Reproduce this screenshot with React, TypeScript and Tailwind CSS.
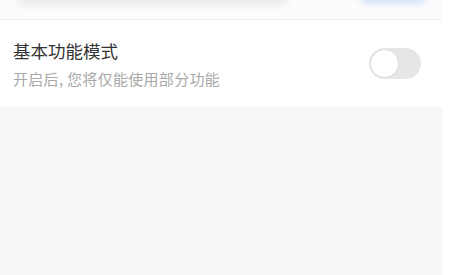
import React from "react";

export default function App() {
  return (
    <div className="w-[449px] h-[275px] bg-white overflow-hidden" style={{ fontFamily: '"Noto Sans CJK SC", "Noto Sans", sans-serif' }}>
      <div className="w-[442px] h-[275px] flex flex-col bg-[#f6f7f9]">
        <div className="relative h-[20px] bg-[#fcfcfc] overflow-hidden border-b border-[#f0f0f0]">
          <div className="absolute left-[18px] top-[-6px] w-[270px] h-[12px] rounded-full bg-[#ececec] blur-[3px]" />
          <div className="absolute left-[360px] top-[-10px] w-[66px] h-[14px] rounded-full bg-[#d6e4fb] blur-[3px]" />
        </div>
        <div className="bg-white h-[87px] flex items-center justify-between pl-[13px] pr-[21px]">
          <div className="flex flex-col">
            <div className="text-[17.5px] leading-[24px] text-[#333333]">基本功能模式</div>
            <div className="mt-[6px] text-[15px] leading-[20px] tracking-[0.3px] text-[#a8a8a8]">开启后, 您将仅能使用部分功能</div>
          </div>
          <div className="relative w-[52px] h-[31px] rounded-full bg-[#e6e6e6]">
            <div className="absolute left-[1px] top-[1px] w-[29px] h-[29px] rounded-full bg-white border border-[#dcdcdc]" />
          </div>
        </div>
        <div className="flex-1" />
      </div>
    </div>
  );
}
